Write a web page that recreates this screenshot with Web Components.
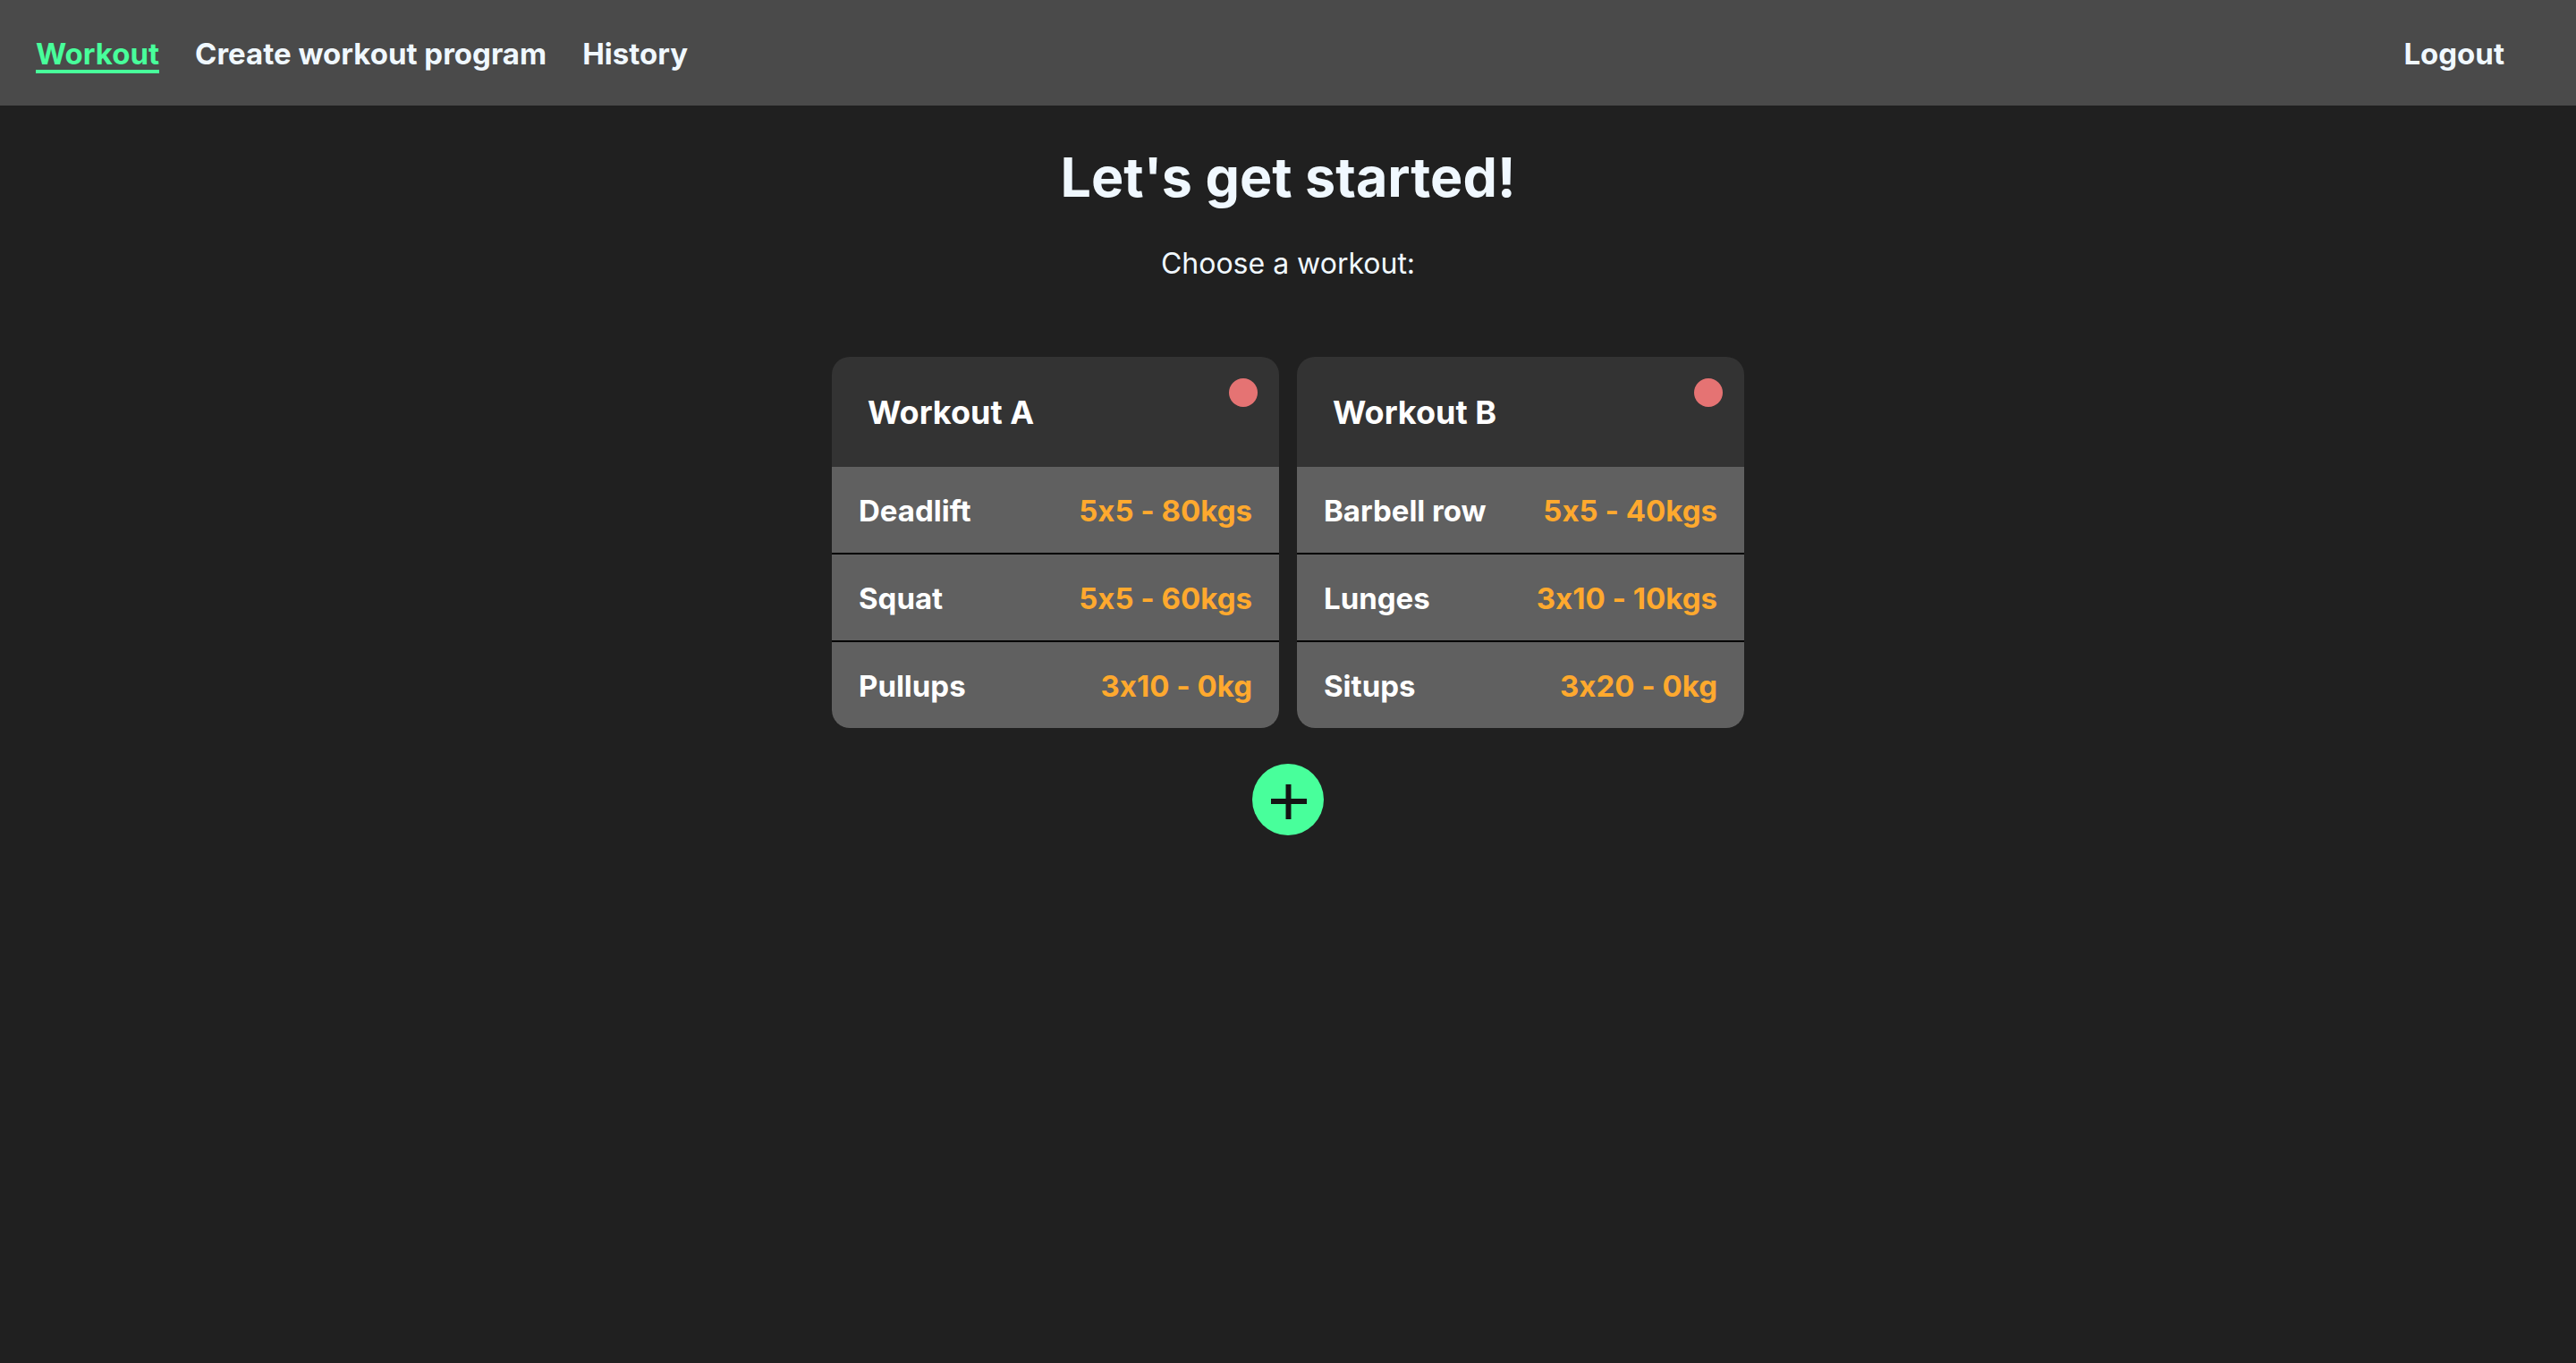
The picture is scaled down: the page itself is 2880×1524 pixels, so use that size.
<!DOCTYPE html>
<html lang="en">
<head>
<meta charset="utf-8">
<title>Workout</title>
<style>
  html, body { margin: 0; min-height: 100%; }
  body {
    background: #202020;
    color: #f0f8ff;
    font: 400 32px/38px Inter, sans-serif;
    font-feature-settings: "calt" 0;
  }
</style>
</head>
<body>
<workout-app></workout-app>

<script>
const define = (name, html) => {
  const template = document.createElement('template');
  template.innerHTML = html;
  customElements.define(name, class extends HTMLElement {
    constructor() {
      super();
      this.attachShadow({ mode: 'open' }).append(template.content.cloneNode(true));
    }
  });
};

define('nav-link', `
  <style>
    :host { display: block; font-weight: 700; font-size: 33px; line-height: 36px; }
    a { display: block; color: #f0f8ff; text-decoration: none; border-bottom: 4px solid transparent; }
    :host([active]) a { color: #48ff9b; border-color: #48ff9b; }
  </style>
  <a href="#"><slot></slot></a>`);

define('site-header', `
  <style>
    :host { display: block; background: #4a4a4a; }
    nav { display: flex; align-items: center; gap: 40px; padding: 42px 80px 36px 40px; }
    ::slotted([slot=end]) { margin-left: auto; }
  </style>
  <nav><slot></slot><slot name="end"></slot></nav>`);

define('exercise-row', `
  <style>
    :host { display: flex; justify-content: space-between; gap: 20px; padding: 30px 30px 28px; background: #606060; color: #fff; font-weight: 700; font-size: 33px; }
    ::slotted([slot=load]) { color: #ffa92e; }
  </style>
  <slot></slot><slot name="load"></slot>`);

define('workout-card', `
  <style>
    :host { display: flex; flex-direction: column; width: 500px; border-radius: 20px; overflow: hidden; background: #333; color: #fff; }
    header { display: flex; justify-content: space-between; align-items: flex-start; padding: 24px 24px 24px 40px; }
    h2 { margin: 0; padding: 17px 0 15px; font-size: 36px; line-height: 43px; font-weight: 700; }
    button { width: 32px; height: 32px; padding: 0; border: 0; border-radius: 50%; background: #e57373; }
    .rows { display: flex; flex-direction: column; gap: 2px; background: #000; }
  </style>
  <header>
    <h2><slot name="title"></slot></h2>
    <button type="button" aria-label="Delete workout"></button>
  </header>
  <div class="rows"><slot></slot></div>`);

define('add-button', `
  <style>
    :host { display: block; }
    button { display: flex; align-items: center; justify-content: center; width: 80px; height: 80px; padding: 0; border: 0; border-radius: 50%; background: #48ff9b; }
    svg { display: block; }
  </style>
  <button type="button" aria-label="Add workout">
    <svg width="80" height="80" viewBox="0 0 80 80"><path d="M21 42H61M40.500 23V62" stroke="#141414" stroke-width="6" fill="none"/></svg>
  </button>`);

define('workout-app', `
  <style>
    :host { display: block; }
    main { display: flex; flex-direction: column; align-items: center; }
    h1 { margin: 42px 0 0; font-size: 61px; line-height: 76px; font-weight: 700; }
    p { margin: 40px 0 0; }
    .cards { display: flex; flex-wrap: wrap; justify-content: center; gap: 20px; margin: 85px 0 40px; }
  </style>
  <site-header>
    <nav-link active>Workout</nav-link>
    <nav-link>Create workout program</nav-link>
    <nav-link>History</nav-link>
    <nav-link slot="end">Logout</nav-link>
  </site-header>
  <main>
    <h1>Let's get started!</h1>
    <p>Choose a workout:</p>
    <div class="cards">
      <workout-card>
        <span slot="title">Workout A</span>
        <exercise-row><span>Deadlift</span><span slot="load">5x5 - 80kgs</span></exercise-row>
        <exercise-row><span>Squat</span><span slot="load">5x5 - 60kgs</span></exercise-row>
        <exercise-row><span>Pullups</span><span slot="load">3x10 - 0kg</span></exercise-row>
      </workout-card>
      <workout-card>
        <span slot="title">Workout B</span>
        <exercise-row><span>Barbell row</span><span slot="load">5x5 - 40kgs</span></exercise-row>
        <exercise-row><span>Lunges</span><span slot="load">3x10 - 10kgs</span></exercise-row>
        <exercise-row><span>Situps</span><span slot="load">3x20 - 0kg</span></exercise-row>
      </workout-card>
    </div>
    <add-button></add-button>
  </main>`);
</script>
</body>
</html>
